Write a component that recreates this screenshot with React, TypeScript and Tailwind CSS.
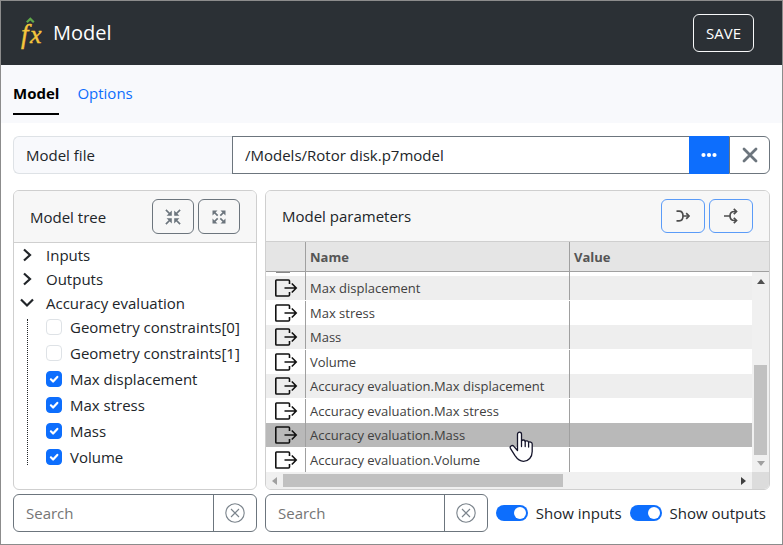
import { useState } from "react";
import { clsx } from "clsx";

const outputs = [
  "Max displacement",
  "Max stress",
  "Mass",
  "Volume",
  "Accuracy evaluation.Max displacement",
  "Accuracy evaluation.Max stress",
  "Accuracy evaluation.Mass",
  "Accuracy evaluation.Volume",
];

const constraints = [
  { label: "Geometry constraints[0]", checked: false },
  { label: "Geometry constraints[1]", checked: false },
  { label: "Max displacement", checked: true },
  { label: "Max stress", checked: true },
  { label: "Mass", checked: true },
  { label: "Volume", checked: true },
];

const FxLogo = () => (
  <svg width="26" height="34" viewBox="0 0 26 34" overflow="visible" aria-hidden="true">
    <path d="M9.800 6.300 13.300 2.900l3.500 3.400" fill="none" stroke="#5fa84a" strokeWidth="2.200" />
    <g
      fontFamily="'Liberation Serif', 'Times New Roman', serif"
      fontStyle="italic"
      fill="#f5c63c"
      stroke="#f5c63c"
      strokeWidth="0.400"
    >
      <text x="4" y="27" fontSize="27">
        f
      </text>
      <text x="13" y="27" fontSize="26">
        x
      </text>
    </g>
  </svg>
);

const CollapseIcon = () => (
  <svg width="16" height="16" viewBox="0 0 16 16" fill="#6c757d" stroke="#6c757d" strokeWidth="1.700" aria-hidden="true">
    <path d="M.9.9 5 5M15.100.9 11 5M.9 15.100 5 11M15.100 15.100 11 11" />
    <path stroke="none" d="M6.800 1.600v5.200H1.600zM9.200 1.600v5.200h5.200zM6.800 14.400V9.200H1.600zM9.200 14.400V9.200h5.200z" />
  </svg>
);

const ExpandIcon = () => (
  <svg width="16" height="16" viewBox="0 0 16 16" fill="#6c757d" stroke="#6c757d" strokeWidth="1.700" aria-hidden="true">
    <path d="M3 3l3.700 3.700M13 3 9.300 6.700M3 13l3.700-3.700M13 13 9.300 9.300" />
    <path stroke="none" d="M1.500 1.500h5l-5 5zM14.500 1.500h-5l5 5zM1.500 14.500h5l-5-5zM14.500 14.500h-5l5-5z" />
  </svg>
);

const MergeIcon = () => (
  <svg width="16" height="16" viewBox="0 0 16 16" fill="none" stroke="#4d4d4d" strokeWidth="1.700" aria-hidden="true">
    <path d="M1.500 3.200h2.700C6.900 3.200 8 5 8 8s-1.100 4.800-3.800 4.800H1.500M8 8h6" />
    <path d="M11.200 5.200 14 8l-2.800 2.800" />
  </svg>
);

const SplitIcon = () => (
  <svg width="16" height="16" viewBox="0 0 16 16" fill="none" stroke="#4d4d4d" strokeWidth="1.700" aria-hidden="true">
    <path d="M1 8h6M13 3.500h-1.500C8.300 3.500 7 5 7 8s1.300 4.500 4.500 4.500H13" />
    <path d="m10.800.8 2.700 2.700-2.700 2.700M10.800 9.800l2.700 2.700-2.700 2.700" />
  </svg>
);

const OutputIcon = () => (
  <svg width="24" height="20" viewBox="0 0 24 20" fill="none" stroke="#111" strokeWidth="1.600" aria-hidden="true">
    <path d="M15.500 6V3q0-1-1-1h-12q-.700 0-.700.800v14.400q0 .800.700.800h12q1 0 1-1v-3" />
    <path d="M10.500 10H22M17.800 5.500 22.200 10l-4.400 4.500" />
  </svg>
);

const ClearIcon = () => (
  <svg width="20" height="20" viewBox="0 0 20 20" fill="none" stroke="#7b848c" strokeWidth="1.100" aria-hidden="true">
    <circle cx="10" cy="10" r="9.200" />
    <path d="m6 6 8 8M14 6l-8 8" />
  </svg>
);

const Chevron = ({ open }: { open?: boolean }) => (
  <svg width="16" height="16" viewBox="0 0 16 16" fill="none" stroke="#212529" strokeWidth="2.200" aria-hidden="true">
    {open ? <path d="m2 4.500 6 6 6-6" /> : <path d="m5 2.500 6 5.500-6 5.500" />}
  </svg>
);

const HandCursor = () => (
  <svg
    className="pointer-events-none absolute left-[244px] top-[240px]"
    width="25"
    height="33"
    viewBox="0 0 25 33"
    fill="#fff"
    stroke="#15152b"
    strokeWidth="1.300"
    strokeLinejoin="round"
    strokeLinecap="round"
    aria-hidden="true"
  >
    <path d="M8.500 20.500V4.300c0-2.900 4-2.900 4 0V11c.5-1.500 3.400-1.300 3.700.5.700-1.200 3.200-.8 3.400.9.900-1 3.600-.5 3.600 1.700v7.400c0 5.600-3.700 9.800-8.700 9.800-4 0-6.500-2.700-8.500-5.700l-4.600-7.300c-1-2 1.600-3.600 3.200-2.200z" />
    <path d="M12.500 11v5.500M16.200 11.500v5M19.600 12.400v4.600" fill="none" />
  </svg>
);

const TreeItem = ({ label, checked: initial }: { label: string; checked: boolean }) => {
  const [checked, setChecked] = useState(initial);

  return (
    <label className="mb-0.5 flex h-6 items-center gap-2">
      <span className="grid shrink-0">
        <input
          type="checkbox"
          checked={checked}
          onChange={() => setChecked(!checked)}
          className="col-start-1 row-start-1 size-4 appearance-none rounded border border-[#dee2e6] bg-white checked:border-[#0d6efd] checked:bg-[#0d6efd]"
        />
        {checked && (
          <svg
            className="pointer-events-none col-start-1 row-start-1"
            width="16"
            height="16"
            viewBox="0 0 16 16"
            fill="none"
            stroke="#fff"
            strokeWidth="2.200"
            strokeLinecap="round"
            strokeLinejoin="round"
          >
            <path d="m4.900 8.300 2.200 2.200 4.200-4.600" />
          </svg>
        )}
      </span>
      <span className="whitespace-nowrap">{label}</span>
    </label>
  );
};

const TreeNode = ({ label, open }: { label: string; open?: boolean }) => (
  <button type="button" aria-expanded={!!open} className="flex h-6 items-center gap-[11px]">
    <Chevron open={open} />
    {label}
  </button>
);

const SearchBox = ({ label, className }: { label: string; className: string }) => (
  <div className={clsx("flex h-[38px] overflow-hidden rounded-md border border-[#6c757d]", className)}>
    <input
      type="text"
      aria-label={label}
      placeholder="Search"
      className="min-w-0 flex-1 px-3 outline-none placeholder:text-[#757575]"
    />
    <button
      type="button"
      aria-label="Clear search"
      className="flex w-[43px] items-center justify-center border-l border-[#6c757d]"
    >
      <ClearIcon />
    </button>
  </div>
);

const Toggle = ({ label }: { label: string }) => (
  <label className="flex items-center gap-2 whitespace-nowrap">
    <input
      type="checkbox"
      role="switch"
      defaultChecked
      className="flex h-4 w-8 shrink-0 appearance-none items-center rounded-full bg-gray-300 px-0.5 before:size-3 before:rounded-full before:bg-white checked:justify-end checked:bg-[#0d6efd]"
    />
    {label}
  </label>
);

const ParametersTable = () => (
  <table className="w-full table-fixed border-separate border-spacing-0 text-left text-[13px] leading-6 text-[#404040]">
    <colgroup>
      <col className="w-10" />
      <col className="w-[264px]" />
      <col />
      <col className="w-[17px]" />
    </colgroup>
    <thead>
      <tr className="h-[30px] bg-[#e5e5e5] text-[#555]">
        <th aria-label="Direction" className="border-r border-b border-[#a0a0a0] p-0" />
        <th className="border-r border-b border-[#a0a0a0] px-1 py-0 font-bold">Name</th>
        <th colSpan={2} className="border-b border-[#a0a0a0] px-1 py-0 font-bold">
          Value
        </th>
      </tr>
    </thead>
    <tbody>
      <tr aria-hidden="true">
        <td className="p-0">
          <div className="h-1 border-r border-[#a0a0a0] pl-2.5">
            <div className="h-px w-3.5 bg-[#888]" />
          </div>
        </td>
        <td className="p-0">
          <div className="h-1 border-r border-[#a0a0a0]" />
        </td>
        <td className="p-0" />
        <td rowSpan={9} className="h-px bg-[#f0f0f0] p-0">
          <div className="flex h-full flex-col items-center pt-[7px] pb-1.5">
            <svg width="8" height="5" viewBox="0 0 8 5" fill="#505050">
              <path d="M0 5 4 0l4 5z" />
            </svg>
            <div className="mt-auto mb-1.5 h-[90px] w-[13px] bg-[#c1c1c1]" />
            <svg width="8" height="5" viewBox="0 0 8 5" fill="#a0a0a0">
              <path d="m0 0 4 5 4-5z" />
            </svg>
          </div>
        </td>
      </tr>
      {outputs.map((name, i) => {
        const odd = i % 2 === 1;
        const cell = odd ? "p-0 pt-px" : "p-0";
        return (
          <tr key={name} className={clsx(i === 6 ? "bg-[#b9b9b9]" : odd ? "bg-white" : "bg-[#eee]")}>
            <td className={cell}>
              <div className="flex h-6 items-center border-r border-[#a0a0a0] pl-2">
                <OutputIcon />
              </div>
            </td>
            <td className={cell}>
              <div className="h-6 border-r border-[#a0a0a0] pl-1 whitespace-nowrap">{name}</div>
            </td>
            <td className={cell} />
          </tr>
        );
      })}
    </tbody>
  </table>
);

const HorizontalScrollbar = () => (
  <div className="flex h-[17px] bg-[#f0f0f0]">
    <div className="flex flex-1 items-center pr-1.5 pl-1.5">
      <svg width="5" height="8" viewBox="0 0 5 8" fill="#a0a0a0">
        <path d="M5 0 0 4l5 4z" />
      </svg>
      <div className="ml-1.5 h-[13px] w-[280px] bg-[#c1c1c1]" />
      <svg className="ml-auto" width="5" height="8" viewBox="0 0 5 8" fill="#404040">
        <path d="m0 0 5 4-5 4z" />
      </svg>
    </div>
    <div className="w-[17px] bg-[#dcdcdc]" />
  </div>
);

export default function App() {
  return (
    <div className="min-h-screen border border-[#8c8c8c] bg-white font-['Open_Sans','Noto_Sans',sans-serif] text-[15px] leading-6 text-[#212529]">
      <header className="flex h-16 items-center bg-[#2b3035] pr-7 pl-4 text-white">
        <FxLogo />
        <h1 className="ml-2.5 text-xl">Model</h1>
        <button type="button" className="ml-auto h-[38px] rounded-md border border-[#f8f9fa] px-3">
          SAVE
        </button>
      </header>

      <nav className="flex h-[58px] items-start gap-[18px] bg-[#f8f9fc] px-3 pt-4">
        <a href="#model" className="h-[34px] border-b-2 border-black font-bold text-black">
          Model
        </a>
        <a href="#options" className="text-[#0d6efd]">
          Options
        </a>
      </nav>

      <main className="px-3 pt-[13px] pb-3">
        <div className="flex h-[38px]">
          <label
            htmlFor="model-file"
            className="flex w-[219px] shrink-0 items-center rounded-l-md border border-r-0 border-[#dee2e6] bg-[#f8f9fc] px-3"
          >
            Model file
          </label>
          <input
            id="model-file"
            type="text"
            defaultValue="/Models/Rotor disk.p7model"
            className="min-w-0 flex-1 border border-r-0 border-[#6c757d] px-3 outline-none"
          />
          <button type="button" aria-label="Browse" className="flex w-10 items-center justify-center bg-[#0d6efd]">
            <svg width="16" height="6" viewBox="0 0 16 6" fill="#fff">
              <circle cx="2.500" cy="3" r="2.100" />
              <circle cx="8" cy="3" r="2.100" />
              <circle cx="13.500" cy="3" r="2.100" />
            </svg>
          </button>
          <button
            type="button"
            aria-label="Clear model file"
            className="flex w-[41px] items-center justify-center rounded-r-md border border-[#6c757d]"
          >
            <svg width="16" height="16" viewBox="0 0 16 16" fill="none" stroke="#6c757d" strokeWidth="2.800" strokeLinecap="round">
              <path d="m2 2 12 12M14 2 2 14" />
            </svg>
          </button>
        </div>

        <div className="mt-4 flex gap-2">
          <section className="w-[244px] shrink-0 overflow-hidden rounded-md border border-[#cfcfcf]">
            <div className="flex h-[52px] items-center gap-1 border-b border-[#cfcfcf] bg-[#f7f7f7] px-4">
              <h2 className="mr-auto">Model tree</h2>
              <button
                type="button"
                aria-label="Collapse all"
                className="flex h-[35px] w-[42px] items-center justify-center rounded-md border border-[#6c757d]"
              >
                <CollapseIcon />
              </button>
              <button
                type="button"
                aria-label="Expand all"
                className="flex h-[35px] w-[42px] items-center justify-center rounded-md border border-[#6c757d]"
              >
                <ExpandIcon />
              </button>
            </div>
            <div className="flex flex-col items-start pl-[5px]">
              <TreeNode label="Inputs" />
              <TreeNode label="Outputs" />
              <TreeNode label="Accuracy evaluation" open />
              <div className="ml-2 flex">
                <div className="mt-1 mb-1.5 border-l border-dotted border-[#212529]" />
                <div className="pl-[18px]">
                  {constraints.map((c) => (
                    <TreeItem key={c.label} {...c} />
                  ))}
                </div>
              </div>
            </div>
          </section>

          <section className="relative min-w-0 flex-1">
            <div className="h-full overflow-hidden rounded-md border border-[#cfcfcf]">
              <div className="flex h-[51px] items-center gap-1 border-b border-[#cfcfcf] bg-[#f7f7f7] px-4">
                <h2 className="mr-auto">Model parameters</h2>
                <button
                  type="button"
                  aria-label="Merge"
                  className="flex h-[34px] w-11 items-center justify-center rounded-md border border-[#5a9bf8]"
                >
                  <MergeIcon />
                </button>
                <button
                  type="button"
                  aria-label="Split"
                  className="flex h-[34px] w-11 items-center justify-center rounded-md border border-[#5a9bf8]"
                >
                  <SplitIcon />
                </button>
              </div>
              <ParametersTable />
              <HorizontalScrollbar />
            </div>
            <HandCursor />
          </section>
        </div>

        <div className="mt-1 flex items-center gap-2 pr-1">
          <SearchBox label="Search model tree" className="w-[244px] shrink-0" />
          <SearchBox label="Search parameters" className="min-w-0 flex-1" />
          <Toggle label="Show inputs" />
          <Toggle label="Show outputs" />
        </div>
      </main>
    </div>
  );
}
